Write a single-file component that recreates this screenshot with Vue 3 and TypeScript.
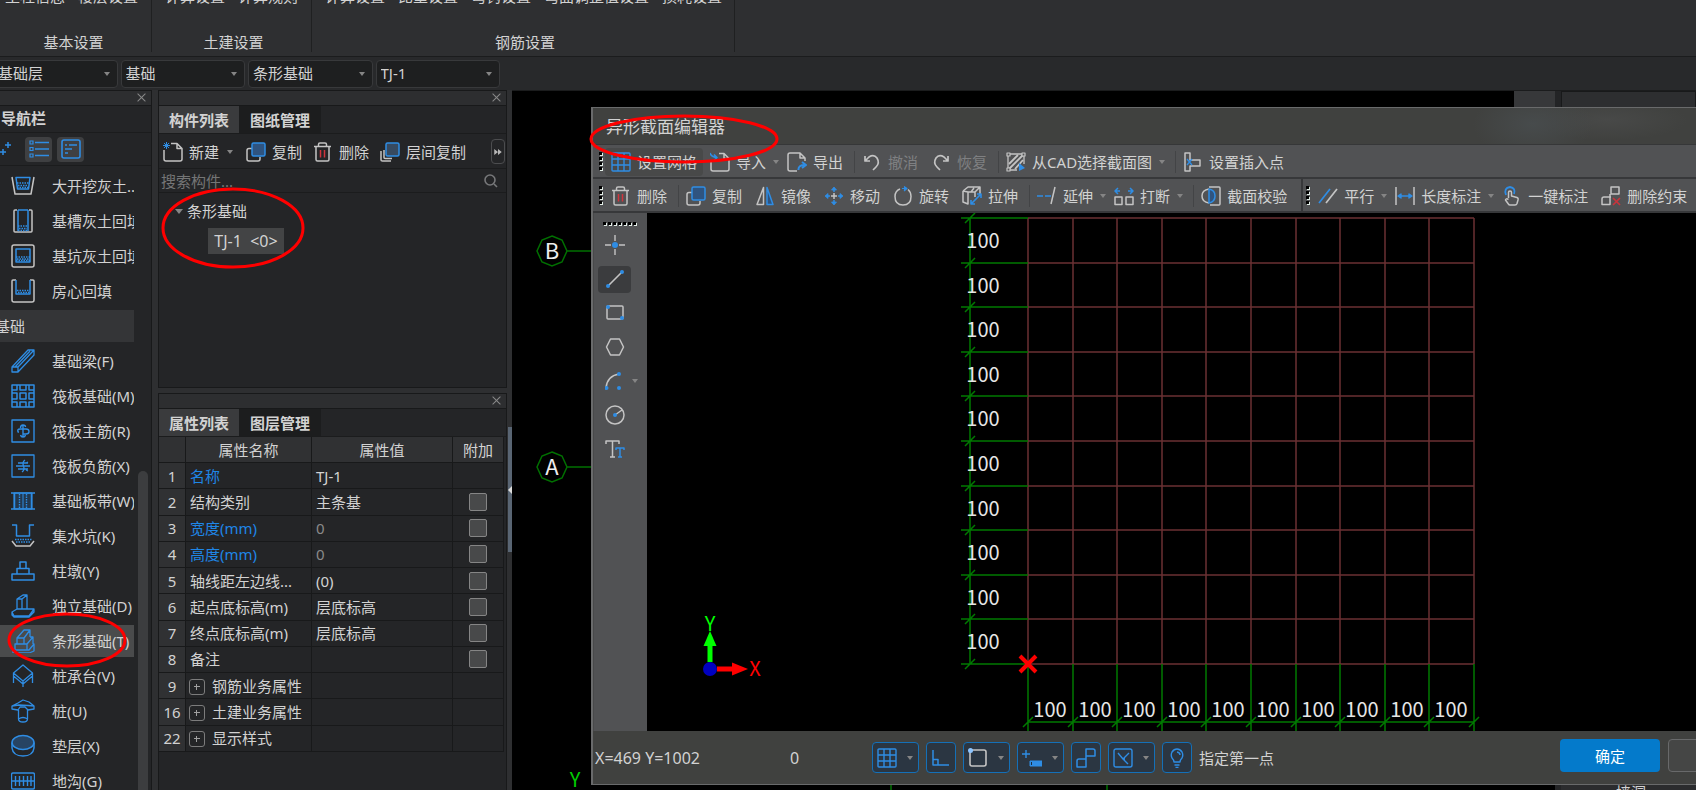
<script setup lang="ts">
interface RibbonGroup { title: string; width: number; items: string[] }
interface NavItem { label: string; icon?: string; group?: boolean; active?: boolean }
interface PropRow { no: number; name: string; value?: string; key?: boolean; dim?: boolean; check?: boolean; expand?: boolean }
interface Tool { icon: string; label: string; caret?: boolean; active?: boolean; off?: boolean; sep?: boolean }

const B = '#2f8de4'
const G = '#c4c4c4'

function blue(d: string, fill = 'none', w = 1.5): string {
  return `<path d="${d}" fill="${fill}" stroke="${B}" stroke-width="${w}" stroke-linejoin="round"/>`
}
function gray(d: string, fill = 'none', w = 1.5): string {
  return `<path d="${d}" fill="${fill}" stroke="${G}" stroke-width="${w}" stroke-linejoin="round"/>`
}
function dots(d: string): string {
  return `<path d="${d}" fill="none" stroke="${B}" stroke-width="1.4" stroke-dasharray="1.5 1"/>`
}
function dot(x: number, y: number, r = 2): string {
  return `<circle cx="${x}" cy="${y}" r="${r}" fill="${B}"/>`
}

const navIcons: Record<string, string> = {
  openPit: gray('M1 3L4 20H20L23 3') + blue('M5 3.5H19L17.5 15H6.5Z') + dots('M6 9H18M7 11.5H17M6 13.5H18'),
  trench: gray('M6 1H4Q3 1 3 2V22Q3 23 4 23H20Q21 23 21 22V2Q21 1 20 1H18') + blue('M7 1V22M17 1V22M7 1H17') + dots('M7 17H17M8 19.5H16M7 21.5H17'),
  pit: gray('M3 1H21Q23 1 23 3V21Q23 23 21 23H3Q1 23 1 21V3Q1 1 3 1Z') + blue('M5 5H19V18H5Z') + dots('M5 13H19M6 15H18M5 16.5H19'),
  room: gray('M5 1H2Q1 1 1 2V21Q1 23 3 23H21Q23 23 23 21V2Q23 1 22 1H19') + blue('M5 1V15H19V1') + dots('M6 11.5H18M7 13.5H18'),
  beam: blue('M1 18L17 1H23V6L7 23H1ZM1 18H7V23M7 18L23 1M4 18L19 2', 'none', 1.3),
  raft: blue('M1 1H23V23H1ZM1 6H6V1M9 1V6H15V1M18 1V6H23M1 9H6V15H1M9 9H15V15H9ZM23 9H18V15H23M1 18H6V23M9 23V18H15V23M18 23V18H23'),
  mainBar: blue('M1 1H23V23H1ZM12 6V18M8 13H7Q6 10 9 10H15Q18 10 18 12.500Q18 15 15 15H12M9.500 9Q9.500 6 12 6Q14.500 6 14.500 8M9.500 16Q10 18 12 18Q14 18 14.500 16', 'none', 1.4),
  negBar: blue('M1 1H23V23H1ZM7 9H17M7 15H17M14 6Q11 8 12.500 12Q14 16 11 18M5 12H19M15 9L17 8M15 16L17 17', 'none', 1.3),
  strip: blue('M3 4H21V20H3Z', '#22384f', 1) + blue('M0 4H24M0 20H24M3.500 4V20M20.500 4V20') + dots('M8.500 5V19M15.500 5V19') + blue('M12 4V20', 'none', 1),
  sump: blue('M1 1H5.500V12H18.500V1H23') + gray('M1 17L5 22H19L23 17') + dots('M4 15.500H21M5 18H19'),
  pier: blue('M1 21V15H23V21ZM6 15V9.500H18V15M9 9.500V3H15V9.500'),
  isolated: blue('M1 18L6 15H23L18 22H3ZM1 18V21L3 23H18L23 18V15M6 15V5L12 1H16V15M6 5H11V15M11 5L16 1', 'none', 1.3),
  stripBase: blue('M2 21H18L23 15V22L18 24H2ZM4 21V15H16V21M6 15V9L13 1H19V8M6 9H13L19 1M13 9V15M16 15L22 8V15M19 8H22', 'none', 1.3),
  cap: blue('M2.500 9L12 1L21.500 9L12 17ZM2.500 9V19M21.500 9V19M12 17V23M2.500 12L12 20L21.500 12', 'none', 1.3),
  pile: blue('M1 7L7 4L12 1L18 3L23 7V10L17 11L14 8H9L7 11L1 10ZM1 7L8 6L17 6.500L23 7M7.500 11V20Q7.500 23 12 23Q16.500 23 16.500 20V10M7.500 20Q12 17 16.500 20', 'none', 1.3),
  cushion: `<ellipse cx="12" cy="8.500" rx="11" ry="7" fill="#274463" stroke="${B}" stroke-width="1.500"/>` + blue('M1 8.500V14Q2 22 12 22Q22 22 23 14V8.500'),
  ditch: blue('M2 4H22Q23.500 4 23.500 6V18Q23.500 20 22 20H2Q0.500 20 0.500 18V6Q0.500 4 2 4ZM0.500 12H23.500M4.500 7V17M8.500 7V17M12.500 7V17M16.500 7V17M20 7V17', 'none', 1.4),
}

const icons: Record<string, string> = {
  copy: gray('M6 6.500H3Q1 6.500 1 8.500V17Q1 19 3 19H12Q14 19 14 17V15') + blue('M7.500 1H17.500Q19 1 19 2.500V12.500Q19 14 17.500 14H7.500Q6 14 6 12.500V2.500Q6 1 7.500 1Z', '#2f5480'),
  trash: gray('M1 4.500H18M5.500 4V2.500Q5.500 1 7 1H12Q13.500 1 13.500 2.500V4M3 5V17.500Q3 19 4.500 19H14.500Q16 19 16 17.500V5') + '<path d="M7.500 8V15.500M11.500 8V15.500" stroke="#d0343c" stroke-width="1.500"/>',
  layer: gray('M4 8V15.500Q4 16.500 5 16.500H12M1 9V18Q1 19 2.500 19H11') + blue('M7.500 1H17.500Q19 1 19 2.500V12.500Q19 14 17.500 14H7.500Q6 14 6 12.500V2.500Q6 1 7.500 1Z', '#374a60'),
  create: gray('M8 1.500H14L19 6.500V17Q19 19 17 19H3Q1 19 1 17V8M14 1.500V6.500H19') + blue('M1 1L6 6M6 1L1 6M3.500 0V7M0 3.500H7', 'none', 1),
  grid: blue('M2 1H18Q19 1 19 2V18Q19 19 18 19H2Q1 19 1 18V2Q1 1 2 1ZM1 7H19M1 13H19M7 1V19M13 1V19', 'none', 1.4),
  import: gray('M9 1.500H14L19 6.500V17Q19 19 17 19H3Q1 19 1 17V9M14 1.500V6.500H19') + blue('M0 1Q1 5 7 5.500M4 2.500L7 5.500L4 8.500', 'none', 1.6),
  export: gray('M10 19H3Q1 19 1 17V3Q1 1 3 1H13L18 6V9M13 1V6H18') + blue('M11.500 18Q11 13 18 13M15 10L19 13L15 16', 'none', 2),
  undo: gray('M3 4V9H8M3 9L7 5Q12 2 15 6Q18 11 14 15L11 18', 'none', 1.7),
  redo: gray('M17 4V9H12M17 9L13 5Q8 2 5 6Q2 11 6 15L9 18', 'none', 1.7),
  cad: gray('M2 2H18V12M2 2V18H11', 'none', 1.3) + gray('M3 12L12 3M3 17L17 3M9 17L17 8', 'none', 1.8) + gray('M1 1H4V4H1ZM16 1H19V4H16ZM1 16H4V19H1Z', '#535456', 1.2) + `<path d="M13 11L19 16L13 19Z" fill="${B}"/>`,
  insert: gray('M2 1H7V8H17V14H7V19H2Z') + blue('M4 7L9 13M9 7L4 13', 'none', 1.3),
  mirror: gray('M8.500 1.500V18.500H2Z') + blue('M12 1.500V18.500H18Z', '#2f5480'),
  move: blue('M7.500 4L10 1L12.500 4ZM7.500 16L10 19L12.500 16ZM4 7.500L1 10L4 12.500ZM16 7.500L19 10L16 12.500Z', B, 0.8) + blue('M10 3V6M10 14V17M3 10H6M14 10H17') + gray('M10 7V13M7 10H13'),
  rotate: gray('M7 3Q2 5 2 10.500Q2 19 10 19Q18 19 18 10.500Q18 6 15 3.500') + blue('M9 2.500H13M11 0.500L14 2.500L11 5', B, 1.2),
  stretch: gray('M1 5L6 1H18V8M1 5V16L6 18V6H13V11M1 5L6 6M13 6L18 1M9 6L12 2') + blue('M9 18L19 8M15 8H19V12M9 14V18H13', 'none', 1.6),
  extend: blue('M0 10H6M8 10H14') + gray('M14 18L18 1'),
  break: gray('M1 11H8V18.500H1ZM12 11H19V18.500H12Z') + blue('M1 5H6M4 2L1 5L4 8M14 5H19M16 2L19 5L16 8', 'none', 1.5),
  verify: gray('M8 1H18Q19 1 19 2V18Q19 19 18 19H9M8 3Q1 4 1 10Q1 16 8 17') + blue('M8 3Q14 4 14 10Q14 16 8 17V3Z', '#2f5480'),
  parallel: blue('M1 17L12 3', 'none', 1.7) + gray('M8 17L19 3', 'none', 1.7),
  length: gray('M1 1V19M19 1V19') + blue('M3 10H17M6 8L3 10L6 12ZM14 8L17 10L14 12Z', B, 1.4),
  touch: blue('M4 9Q1.500 2 8 1Q14 2 12 8', 'none', 1.8) + gray('M6.500 12V6.500Q6.500 5 8 5Q9.500 5 9.500 6.500V10L15 11.500Q16.500 12 16 14L15 17.500Q14.500 19 13 19H8Q7 19 6 17.500L3.500 14Q4 12 6.500 13.500'),
  unbind: gray('M10 1H18V8H10ZM10 11H3Q1 11 1 13V18.500H9V8') + '<path d="M12 12L19 19M19 12L12 19" stroke="#c8343c" stroke-width="1.700"/>',
  point: gray('M10 0V6M10 14V20M0 10H6M14 10H20', 'none', 1.4) + dot(10, 10, 3),
  line: gray('M3 17L17 3', 'none', 1.6) + dot(3, 17) + dot(17, 3),
  rect: gray('M3 3H17Q18 3 18 4V15Q18 16 17 16H3Q2 16 2 15V4Q2 3 3 3Z') + dot(3, 4) + dot(17, 15),
  hexagon: gray('M5.500 2H14.500L18.500 10L14.500 18H5.500L1.500 10Z'),
  arc: gray('M1 17Q2 5 14 3') + dot(1.5, 17) + dot(14, 3) + dot(14, 17),
  circle: gray('M19 10A9 9 0 1 1 1 10A9 9 0 1 1 19 10ZM10 10L17 5') + dot(10, 10),
  text: gray('M1 5V2H14V5M7.500 2V18M5 18H10', 'none', 1.5) + blue('M11 11V9H19V11M15 9V18M13 18H17', 'none', 1.5),
  ortho: blue('M2 2V17H18M2 11.500H7V17'),
  snapRect: gray('M4 2H16Q18 2 18 4V16Q18 18 16 18H4Q2 18 2 16V4Q2 2 4 2Z', 'none', 1.6) + '<circle cx="2.500" cy="2.500" r="2.500" fill="#8cc4ff"/>',
  track: blue('M0 6H8M4 2V10', 'none', 1.4) + `<path d="M8 13H20V18H8Z" fill="${B}" stroke="${B}"/><path d="M9.500 14V17" stroke="#1d2c3c" stroke-width="1"/>`,
  link: blue('M10 1H17Q19 1 19 3V8H10ZM10 8V19H1V13Q1 11 3 11H10'),
  square: blue('M3 1H17Q19 1 19 3V17Q19 19 17 19H3Q1 19 1 17V3Q1 1 3 1ZM5 5L10 11H12M16 5L10 11L15 16', 'none', 1.4),
  bulb: blue('M7 14Q7 12 5 10Q3.500 7 5 4Q7 1 10 1Q13 1 15 4Q16.500 7 15 10Q13 12 13 14ZM7.500 17H12.500M8.500 19.500H11.500M10 4Q13 4.500 13 7', 'none', 1.4),
}

const ribbon: RibbonGroup[] = [
  { title: '基本设置', width: 152, items: ['工程信息', '楼层设置'] },
  { title: '土建设置', width: 160, items: ['计算设置', '计算规则'] },
  { title: '钢筋设置', width: 423, items: ['计算设置', '比重设置', '弯钩设置', '弯曲调整值设置', '损耗设置'] },
]
const filters = [
  { label: '楼层', value: '基础层' },
  { label: '构件大类', value: '基础' },
  { label: '构件类型', value: '条形基础' },
  { label: '构件', value: 'TJ-1' },
]
const nav: NavItem[] = [
  { label: '大开挖灰土..', icon: 'openPit' },
  { label: '基槽灰土回填', icon: 'trench' },
  { label: '基坑灰土回填', icon: 'pit' },
  { label: '房心回填', icon: 'room' },
  { label: '基础', group: true },
  { label: '基础梁(F)', icon: 'beam' },
  { label: '筏板基础(M)', icon: 'raft' },
  { label: '筏板主筋(R)', icon: 'mainBar' },
  { label: '筏板负筋(X)', icon: 'negBar' },
  { label: '基础板带(W)', icon: 'strip' },
  { label: '集水坑(K)', icon: 'sump' },
  { label: '柱墩(Y)', icon: 'pier' },
  { label: '独立基础(D)', icon: 'isolated' },
  { label: '条形基础(T)', icon: 'stripBase', active: true },
  { label: '桩承台(V)', icon: 'cap' },
  { label: '桩(U)', icon: 'pile' },
  { label: '垫层(X)', icon: 'cushion' },
  { label: '地沟(G)', icon: 'ditch' },
]
const props: PropRow[] = [
  { no: 1, name: '名称', value: 'TJ-1', key: true },
  { no: 2, name: '结构类别', value: '主条基', check: true },
  { no: 3, name: '宽度(mm)', value: '0', key: true, dim: true, check: true },
  { no: 4, name: '高度(mm)', value: '0', key: true, dim: true, check: true },
  { no: 5, name: '轴线距左边线...', value: '(0)', check: true },
  { no: 6, name: '起点底标高(m)', value: '层底标高', check: true },
  { no: 7, name: '终点底标高(m)', value: '层底标高', check: true },
  { no: 8, name: '备注', check: true },
  { no: 9, name: '钢筋业务属性', expand: true },
  { no: 16, name: '土建业务属性', expand: true },
  { no: 22, name: '显示样式', expand: true },
]
const listTools: Tool[] = [
  { icon: 'create', label: '新建', caret: true },
  { icon: 'copy', label: '复制' },
  { icon: 'trash', label: '删除' },
  { icon: 'layer', label: '层间复制' },
]
const toolRows: Tool[][][] = [
  [[
    { icon: 'grid', label: '设置网格', active: true },
    { icon: 'import', label: '导入', caret: true },
    { icon: 'export', label: '导出', sep: true },
    { icon: 'undo', label: '撤消', off: true },
    { icon: 'redo', label: '恢复', off: true, sep: true },
    { icon: 'cad', label: '从CAD选择截面图', caret: true, sep: true },
    { icon: 'insert', label: '设置插入点' },
  ]],
  [[
    { icon: 'trash', label: '删除', sep: true },
    { icon: 'copy', label: '复制' },
    { icon: 'mirror', label: '镜像' },
    { icon: 'move', label: '移动' },
    { icon: 'rotate', label: '旋转' },
    { icon: 'stretch', label: '拉伸', sep: true },
    { icon: 'extend', label: '延伸', caret: true },
    { icon: 'break', label: '打断', caret: true, sep: true },
    { icon: 'verify', label: '截面校验' },
  ], [
    { icon: 'parallel', label: '平行', caret: true },
    { icon: 'length', label: '长度标注', caret: true },
    { icon: 'touch', label: '一键标注' },
    { icon: 'unbind', label: '删除约束' },
  ]],
]
const drawTools: Tool[] = [
  { icon: 'point', label: '点' },
  { icon: 'line', label: '直线', active: true },
  { icon: 'rect', label: '矩形' },
  { icon: 'hexagon', label: '多边形' },
  { icon: 'arc', label: '弧', caret: true },
  { icon: 'circle', label: '圆' },
  { icon: 'text', label: '文字' },
]
const modes: Tool[] = [
  { icon: 'grid', label: '网格', caret: true },
  { icon: 'ortho', label: '正交' },
  { icon: 'snapRect', label: '捕捉', caret: true },
  { icon: 'track', label: '动态输入', caret: true },
  { icon: 'link', label: '关联' },
  { icon: 'square', label: '角度', caret: true },
  { icon: 'bulb', label: '提示' },
]

const cell = 44.6
const x0 = 381
const y0 = 5
const end = cell * 10
const steps = Array.from({ length: 11 }, (_, i) => Math.round(i * cell))
const spans = steps.slice(0, 10)
</script>

<template>
  <div class="app">
    <header class="ribbon">
      <section v-for="g in ribbon" :key="g.title" class="ribbon-group" :style="{ width: g.width + 'px' }">
        <div class="ribbon-items"><span v-for="i in g.items" :key="i">{{ i }}</span></div>
        <div class="ribbon-title">{{ g.title }}</div>
      </section>
    </header>

    <div class="filters">
      <div class="filter-grid">
        <label v-for="f in filters" :key="f.label" class="combo">
          <select :aria-label="f.label"><option>{{ f.value }}</option></select>
          <i class="caret"></i>
        </label>
      </div>
    </div>

    <div class="body">
      <nav class="nav">
        <div class="strip"><button class="close" aria-label="关闭导航栏"></button></div>
        <h2 class="nav-title">导航栏</h2>
        <div class="nav-modes">
          <button aria-label="展开" class="plus">
            <svg width="14" height="16" viewBox="0 0 14 16"><path d="M8 1V7M5 4H11M3 8V14M0 11H6" stroke="#2f8de4" stroke-width="1.500" /></svg>
          </button>
          <button aria-label="列表" class="mode">
            <svg width="20" height="18" viewBox="0 0 20 18" fill="none" stroke="#2f8de4" stroke-width="1.500"><path d="M6 2.500H20M6 9H20M6 15.500H20" /><path d="M1 1H4V4H1ZM1 7.500H4V10.500H1ZM1 14H4V17H1Z" stroke-width="1.200" /></svg>
          </button>
          <button aria-label="详情" class="mode">
            <svg width="20" height="20" viewBox="0 0 20 20" fill="none" stroke="#2f8de4" stroke-width="1.600"><rect x="1" y="1" width="18" height="18" rx="2" /><path d="M4 6H6M8 6H16M4 10H11M4 14H7" stroke-width="1.400" /></svg>
          </button>
        </div>
        <div class="nav-scroll">
          <ul class="nav-list">
            <li v-for="n in nav" :key="n.label" :class="{ group: n.group, active: n.active }">
              <a href="#">
                <svg v-if="n.icon" width="24" height="24" viewBox="0 0 24 24" v-html="navIcons[n.icon]"></svg>
                <span>{{ n.label }}</span>
              </a>
            </li>
          </ul>
          <div class="scrollbar"><i></i></div>
        </div>
      </nav>

      <div class="middle">
        <section class="panel list-panel">
          <div class="strip"><button class="close" aria-label="关闭构件列表"></button></div>
          <div class="tabs"><button class="tab on">构件列表</button><button class="tab">图纸管理</button></div>
          <div class="list-tools">
            <button v-for="t in listTools" :key="t.label" class="tool">
              <svg width="20" height="20" viewBox="0 0 20 20" v-html="icons[t.icon]"></svg>
              <span>{{ t.label }}</span><i v-if="t.caret" class="caret"></i>
            </button>
            <button class="more" aria-label="更多">
              <svg width="8" height="6" viewBox="0 0 10 8"><path d="M0 0L5 4L0 8ZM5 0L10 4L5 8Z" fill="#b8b8b8" /></svg>
            </button>
          </div>
          <label class="search">
            <input type="text" placeholder="搜索构件..." aria-label="搜索构件">
            <svg width="14" height="14" viewBox="0 0 14 14" fill="none" stroke="#77787a" stroke-width="1.600"><circle cx="6" cy="6" r="5" /><path d="M10 10L13 13" /></svg>
          </label>
          <div class="tree">
            <div class="tree-parent"><i class="caret"></i>条形基础</div>
            <button class="tree-child">TJ-1 &nbsp;&lt;0&gt;</button>
          </div>
        </section>

        <section class="panel prop-panel">
          <div class="strip"><button class="close" aria-label="关闭属性列表"></button></div>
          <div class="tabs"><button class="tab on">属性列表</button><button class="tab">图层管理</button></div>
          <table>
            <colgroup><col class="c-no"><col class="c-name"><col><col class="c-add"></colgroup>
            <thead><tr><th></th><th>属性名称</th><th>属性值</th><th>附加</th></tr></thead>
            <tbody>
              <tr v-for="p in props" :key="p.no">
                <td class="no">{{ p.no }}</td>
                <td :class="{ key: p.key }">
                  <button v-if="p.expand" class="expand" :aria-label="'展开' + p.name"></button>{{ p.name }}
                </td>
                <td :class="{ dim: p.dim }">{{ p.value }}</td>
                <td class="add"><input v-if="p.check" type="checkbox" :aria-label="p.name + '附加'"></td>
              </tr>
            </tbody>
          </table>
        </section>
      </div>

      <div class="splitter">
        <button class="grip" aria-label="折叠面板"></button>
      </div>

      <main class="workspace">
        <div class="model">
          <svg class="axes" width="100%" height="100%" fill="none" stroke="#007000" stroke-width="1.500">
            <g v-for="a in [{ t: 'B', y: 160 }, { t: 'A', y: 376 }]" :key="a.t">
              <path :transform="`translate(40 ${a.y})`" d="M0 -15L10 -11L15 0L10 11L0 15L-10 11L-15 0L-10 -11ZM15 0H40" />
              <text x="40" :y="a.y + 8" class="axis">{{ a.t }}</text>
            </g>
            <path d="M379 690V720M595 690V720" />
            <text x="63" y="696" class="axis-y">Y</text>
          </svg>
          <div class="view-strip"></div>
        </div>
        <aside class="right-dock">
          <div class="dock-head"></div>
          <div class="dock-foot">墙洞</div>
        </aside>

        <section class="dialog" role="dialog" aria-labelledby="dlg-title">
          <h1 id="dlg-title">异形截面编辑器</h1>
          <div v-for="(row, r) in toolRows" :key="r" class="toolbar">
            <div v-for="(grp, g) in row" :key="g" class="tool-group">
              <svg class="handle" width="4" height="20"><path d="M2.500 1V20" stroke="#e4efe9" stroke-width="3" stroke-dasharray="3 2" /><path d="M1.500 0V20" stroke="#000" stroke-width="3" stroke-dasharray="3 2" /></svg>
              <template v-for="t in grp" :key="t.label">
                <button class="tool" :class="{ active: t.active, off: t.off, drop: t.caret }">
                  <svg width="20" height="20" viewBox="0 0 20 20" v-html="icons[t.icon]"></svg>
                  <span>{{ t.label }}</span><i v-if="t.caret" class="caret"></i>
                </button>
                <i v-if="t.sep" class="sep" :class="{ wide: t.caret }"></i>
              </template>
            </div>
          </div>
          <div class="editor">
            <div class="side">
              <svg class="handle-h" width="35" height="4"><path d="M1 2.500H35" stroke="#e4efe9" stroke-width="3" stroke-dasharray="3 2" /><path d="M0 1.500H35" stroke="#000" stroke-width="3" stroke-dasharray="3 2" /></svg>
              <div v-for="t in drawTools" :key="t.label" class="side-row">
                <button class="draw" :class="{ active: t.active }" :aria-label="t.label">
                  <svg width="20" height="20" viewBox="0 0 20 20" v-html="icons[t.icon]"></svg>
                </button>
                <i v-if="t.caret" class="caret"></i>
              </div>
            </div>
            <svg class="section" width="100%" height="100%" fill="none">
              <g :transform="`translate(${x0} ${y0})`">
                <g stroke="#6b3033" stroke-width="1.500">
                  <path v-for="s in steps" :key="s" :d="`M0 ${s}H${end}M${s} 0V${end}`" />
                </g>
                <g stroke="#007a00" stroke-width="1.500">
                  <path d="M-58 0V446M0 504H446" />
                  <path v-for="s in steps" :key="s" :d="`M-67 ${s}H0M${s} ${end}V514M-63 ${s + 5}L-53 ${s - 5}M${s - 5} 509L${s + 5} 499`" />
                </g>
                <g class="dims">
                  <text v-for="s in spans" :key="'v' + s" x="-45" :y="s + 30">100</text>
                  <text v-for="s in spans" :key="'h' + s" :x="s + 22" y="499">100</text>
                </g>
                <path d="M-8 438L8 454M8 438L-8 454" stroke="#f00" stroke-width="4" />
              </g>
              <g transform="translate(63 456)">
                <path d="M7 0H22" stroke="#f00" stroke-width="5" /><path d="M22 -6.500L38 0L22 6.500Z" fill="#f00" />
                <path d="M0 -7V-24" stroke="#0f0" stroke-width="5" /><path d="M-6.500 -23L0 -38L6.500 -23Z" fill="#0f0" />
                <circle r="7" fill="#0000c0" />
                <text class="ucs" x="0" y="-38" fill="#0f0">Y</text>
                <text class="ucs" x="45" y="7" fill="#f00">X</text>
              </g>
            </svg>
          </div>
          <footer class="status">
            <output class="coords">X=469 Y=1002</output>
            <output class="angle">0</output>
            <div class="modes">
              <button v-for="m in modes" :key="m.label" class="snap" :aria-label="m.label">
                <svg width="20" height="20" viewBox="0 0 20 20" v-html="icons[m.icon]"></svg><i v-if="m.caret" class="caret"></i>
              </button>
              <span>指定第一点</span>
            </div>
            <button class="ok">确定</button>
            <button class="cancel" aria-label="取消"></button>
          </footer>
        </section>
      </main>
    </div>

    <svg class="marks" width="100%" height="100%" fill="none" stroke="#f00" stroke-width="3" aria-hidden="true">
      <ellipse cx="233" cy="228" rx="70" ry="39" />
      <ellipse cx="67" cy="640" rx="58" ry="26" />
      <ellipse cx="684" cy="139" rx="93" ry="23" />
    </svg>
  </div>
</template>

<style>
body { margin: 0; background: #000; }
</style>

<style scoped>
* { box-sizing: border-box; }
.app { position: relative; display: flex; flex-direction: column; height: 100vh; overflow: hidden; background: #242527; color: #d2d2d2; font: 15px/20px "Noto Sans", "Noto Sans CJK SC", sans-serif; white-space: nowrap; }
button, input, select { font: inherit; color: inherit; background: none; border: 0; margin: 0; padding: 0; white-space: nowrap; }
svg { display: block; flex: none; }
.caret { flex: none; width: 0; height: 0; margin: 0 1px; border: 3px solid transparent; border-top: 4px solid #858585; border-bottom: 0; }

.ribbon { display: flex; height: 57px; flex: none; background: #2e2f31; border-bottom: 1px solid #1b1c1d; }
.ribbon-group { display: flex; flex-direction: column; justify-content: space-between; height: 52px; border-right: 1px solid #1f2021; }
.ribbon-items { display: flex; gap: 13px; margin-top: -14px; padding-left: 13px; }
.ribbon-group:first-child .ribbon-items { padding-left: 5px; }
.ribbon-title { padding-left: 4px; text-align: center; }
.ribbon-group:first-child .ribbon-title { padding: 0 4px 0 0; }

.filters { height: 33px; flex: none; background: #28292b; }
.filter-grid { display: grid; grid-template-columns: repeat(4, 1fr); gap: 3px; width: 507px; margin-left: -7px; padding-top: 3px; }
.combo { position: relative; display: block; }
.combo select { appearance: none; width: 100%; height: 28px; padding: 0 0 2px 4px; border: 1px solid #38393b; border-radius: 4px; background: #1e1f20; }
.combo .caret { position: absolute; right: 7px; top: 12px; }

.body { display: flex; flex: 1; min-height: 0; background: #2e2f31; }
.nav { display: flex; flex-direction: column; width: 152px; flex: none; background: #242527; border-top: 1px solid #18191a; border-right: 1px solid #18191a; }
.strip { display: flex; justify-content: flex-end; align-items: center; height: 15px; flex: none; padding-right: 5px; background: #2d2e30; border-bottom: 1px solid #18191a; }
.close { position: relative; width: 10px; height: 12px; }
.close::before, .close::after { content: ""; position: absolute; left: 0; top: 5px; width: 11px; height: 1px; background: #8a8a8a; transform: rotate(45deg); }
.close::after { transform: rotate(-45deg); }
.nav-title { margin: 0; padding: 2px 1px 4px; font-size: 15px; line-height: 20px; border-bottom: 1px solid #1b1c1d; }
.nav-modes { display: flex; gap: 5px; height: 33px; align-items: center; border-bottom: 1px solid #1b1c1d; flex: none; }
.plus { width: 20px; }
.mode { display: grid; place-items: center; width: 27px; height: 25px; border-radius: 4px; background: #3f4042; }
.nav-scroll { display: flex; flex: 1; min-height: 0; overflow: hidden; padding-top: 2px; }
.nav-list { width: 134px; flex: none; margin: 0; padding: 0; list-style: none; }
.nav-list li { height: 35px; padding: 2px 0 1px; overflow: hidden; }
.nav-list a { display: flex; align-items: center; gap: 17px; height: 32px; padding-left: 11px; color: inherit; text-decoration: none; overflow: hidden; }
.nav-list .group a { padding-left: 0; margin-left: -5px; background: #343537; }
.nav-list .active a { background: #4a4b4c; }
.scrollbar { flex: 1; padding: 303px 3px 0 4px; }
.scrollbar i { display: block; height: 100%; border-radius: 5px 5px 0 0; background: #3c3d3f; }

.middle { display: flex; flex-direction: column; gap: 5px; width: 349px; flex: none; margin-left: 6px; }
.panel { display: flex; flex-direction: column; background: #242527; border: 1px solid #18191a; }
.list-panel { height: 298px; flex: none; }
.prop-panel { flex: 1; min-height: 0; border-bottom: 0; }
.tabs { display: flex; height: 28px; flex: none; border-bottom: 1px solid #1b1c1d; }
.tab { width: 80px; font-weight: 700; background: #1c1d1e; }
.tab + .tab { width: 82px; }
.tab.on { background: #3a3b3d; }
.list-tools { display: flex; align-items: center; height: 35px; flex: none; padding-top: 1px; border-bottom: 1px solid #1b1c1d; }
.tool { display: flex; align-items: center; gap: 6px; padding: 0 6px; height: 28px; border-radius: 4px; }
.tool.drop { padding-right: 0; }
.list-tools .tool { padding: 0 7px 0 4px; }
.list-tools .caret { margin: 0 2px; }
.more { display: grid; place-items: center; width: 14px; height: 25px; margin: 0 1px 0 auto; border: 1px solid #4c4d4f; border-radius: 4px; }
.search { display: flex; align-items: center; height: 24px; flex: none; padding: 0 8px 0 2px; border-bottom: 1px solid #1b1c1d; }
.search input { flex: 1; min-width: 0; outline: 0; }
.search input::placeholder { color: #747576; opacity: 1; }
.tree { padding: 8px 0 0 16px; }
.tree-parent { display: flex; align-items: center; gap: 4px; }
.tree-parent .caret { margin: 0; border-width: 5px 4px 0; }
.tree-child { display: block; margin: 7px 0 0 33px; width: 76px; height: 26px; font-size: 16px; background: #434445; }

table { width: 345px; height: 315px; border-collapse: separate; border-spacing: 0; table-layout: fixed; }
.c-no { width: 27px; }
.c-name { width: 126px; }
.c-add { width: 51px; }
th { height: 26px; padding: 0; font-weight: 400; background: #303133; }
tbody td { height: 26px; }
td { padding: 0 4px; }
th, td { border-right: 1px solid #18191a; border-bottom: 1px solid #18191a; overflow: hidden; }
td.no { padding: 0; text-align: center; background: #303133; }
td.key { color: #1f86e6; }
td.dim { color: #8a8a8a; }
td.add { text-align: center; padding: 0; }
.add input { display: block; appearance: none; width: 18px; height: 18px; margin: 0 auto; border: 1px solid #858585; border-radius: 2px; background: #48494a; }
.expand { position: relative; display: inline-block; width: 16px; height: 16px; margin: 0 7px 0 -1px; vertical-align: -2px; border: 1px solid #7c7c7c; border-radius: 3px; }
.expand::before, .expand::after { content: ""; position: absolute; left: 4px; top: 6px; width: 6px; height: 1px; background: #a0a0a0; }
.expand::after { left: 6px; top: 4px; width: 1px; height: 6px; }

.splitter { display: flex; flex-direction: column; width: 5px; flex: none; padding: 337px 0 0 1px; }
.grip { width: 4px; height: 125px; background: #596573; }
.grip::before { content: ""; display: block; border: 4px solid transparent; border-left: 0; border-right-color: #ddd; }

.workspace { position: relative; display: flex; flex: 1; min-width: 0; overflow: hidden; border-top: 1px solid #1b1c1d; background: #000; }
.model { display: flex; flex: 1; min-width: 0; position: relative; justify-content: flex-end; }
.axes { position: absolute; inset: 0; }
.axis { font: 22px "Noto Sans CJK SC", sans-serif; fill: #eee; stroke: none; text-anchor: middle; }
.axis-y { font: 20px "Noto Sans CJK SC", sans-serif; fill: #0c0; stroke: none; text-anchor: middle; }
.view-strip { width: 41px; height: 40px; background: #37383a; }
.right-dock { display: flex; flex-direction: column; justify-content: space-between; width: 141px; flex: none; background: #232426; padding-left: 6px; }
.dock-head { height: 24px; background: #2d2e30; border: 1px solid #18191a; }
.dock-foot { height: 5px; overflow: hidden; padding-left: 55px; line-height: 14px; background: #2b2c2e; }

.dialog { position: absolute; left: 79px; top: 16px; right: -92px; bottom: 5px; display: flex; flex-direction: column; border: solid #696a6b; border-width: 1px 1px 1px 2px; background: #40413f; }
h1 { margin: 0; height: 37px; flex: none; padding-left: 13px; font-size: 17px; font-weight: 400; line-height: 37px; border-bottom: 1px solid #363738; background: radial-gradient(60px 34px at 940px 16px, #474b4c, transparent), radial-gradient(80px 20px at 1015px 12px, #484948, transparent), #40413f; }
.toolbar { display: flex; height: 34px; flex: none; background: #515254; border-bottom: 2px solid #37383a; overflow: hidden; }
.tool-group { display: flex; align-items: center; gap: 1px; padding: 1px 8px 0 6px; }
.tool-group + .tool-group { border-left: 2px solid #37383a; padding-left: 3px; }
.handle { margin-right: 1px; }
.toolbar .tool.active { background: #484949; }
.toolbar .off { color: #7f8082; }
.sep { width: 5px; height: 22px; border-right: 1px solid #434446; }
.sep.wide { width: 9px; }
.editor { display: flex; flex: 1; min-height: 0; background: #000; }
.side { width: 54px; flex: none; padding-top: 9px; background: #515254; border-left: 1px solid #48494a; }
.handle-h { margin: 0 0 2px 9px; }
.side-row { display: flex; align-items: center; height: 34px; padding-left: 4px; }
.draw { display: grid; place-items: center; width: 33px; height: 27px; border-radius: 4px; }
.draw.active { background: #3b3c3e; }
.section { flex: 1; min-width: 0; }
.dims text { font: 20px "Noto Sans CJK SC", sans-serif; fill: #e6e6e6; text-anchor: middle; }
.ucs { font: 20px "Noto Sans CJK SC", sans-serif; text-anchor: middle; }
.status { display: flex; align-items: center; height: 53px; flex: none; padding-right: 19px; background: #40413f; }
.coords, .angle { font-size: 16px; }
.coords { width: 195px; padding-left: 2px; }
.angle { width: 84px; padding-left: 2px; }
.modes { display: flex; align-items: center; gap: 7px; flex: 1; }
.snap { display: flex; align-items: center; gap: 9px; height: 31px; padding: 0 4px; border: 1px solid #1470b8; border-radius: 4px; background: #2b3642; }
.ok { width: 100px; height: 33px; margin-bottom: 4px; border-radius: 4px; background: #047acb; color: #fff; }
.cancel { width: 100px; height: 33px; margin: 0 0 4px 8px; border: 1px solid #68696a; border-radius: 4px; background: #454645; }

.marks { position: absolute; inset: 0; pointer-events: none; }
</style>
